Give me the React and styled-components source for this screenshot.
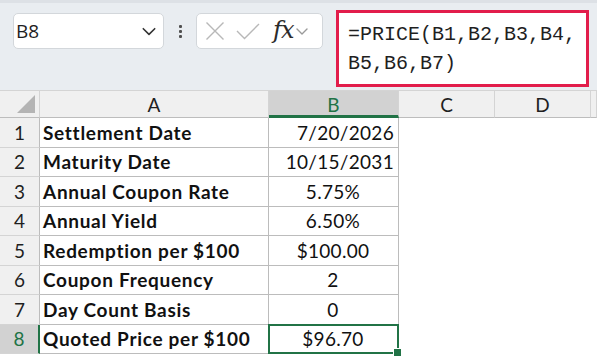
import React from "react";
import styled, { createGlobalStyle } from "styled-components";

const GlobalStyle = createGlobalStyle`
  html, body {
    margin: 0;
    padding: 0;
    background: #ffffff;
  }
  body {
    width: 597px;
    height: 360px;
    overflow: hidden;
    font-family: "Lato", "Liberation Sans", sans-serif;
  }
`;

const Page = styled.div`
  width: 597px;
  height: 360px;
  display: flex;
  flex-direction: column;
  overflow: hidden;
`;

const FormulaBar = styled.div`
  height: 90px;
  flex: none;
  display: flex;
  align-items: flex-start;
  background: #e9edf1;
  border-top: 3px solid #dde1e6;
  box-sizing: border-box;
  padding-left: 13px;
`;

const NameBox = styled.div`
  margin-top: 10px;
  width: 151px;
  height: 36px;
  box-sizing: border-box;
  background: #ffffff;
  border: 1px solid #d3d7db;
  border-radius: 5px;
  display: flex;
  align-items: center;
  justify-content: space-between;
  padding: 0 6px 0 2px;
  font-family: "Open Sans", "Liberation Sans", sans-serif;
  font-size: 19px;
  color: #1f1f1f;
`;

const Dots = styled.div`
  width: 32px;
  height: 36px;
  margin-top: 10px;
  display: flex;
  flex-direction: column;
  align-items: center;
  justify-content: center;
  gap: 2px;

  span {
    width: 3px;
    height: 3px;
    background: #505050;
    border-radius: 1px;
  }
`;

const FxGroup = styled.div`
  margin-top: 10px;
  width: 127px;
  height: 36px;
  box-sizing: border-box;
  background: #ffffff;
  border: 1px solid #d3d7db;
  border-radius: 5px;
  display: flex;
  align-items: center;
  padding-left: 8px;
  gap: 11px;
`;

const FxLabel = styled.span`
  font-family: "DejaVu Serif", "Liberation Serif", serif;
  font-style: italic;
  font-size: 24px;
  color: #2b2b2b;
  letter-spacing: -1px;
  margin-left: 2px;
  margin-right: -9px;
  margin-top: -3px;
`;

const FormulaInput = styled.div`
  margin-left: 13px;
  margin-top: 7px;
  width: 253px;
  height: 77px;
  box-sizing: border-box;
  border: 3px solid #e21d4b;
  background: #ffffff;
  padding: 7px 0 0 9px;
  font-family: "Liberation Mono", "DejaVu Sans Mono", monospace;
  font-size: 20px;
  line-height: 29px;
  color: #1f1f1f;
  white-space: pre;
`;

const Sheet = styled.div`
  display: grid;
  grid-template-columns: 40px 229px 130px 96px 96px 1fr;
  grid-template-rows: 27px repeat(8, 29.5px);
  border-top: 1px solid #d4d4d4;
  background: #ffffff;
`;

const Corner = styled.div`
  background: #f0f0f0;
  border-right: 1px solid #d4d4d4;
  border-bottom: 1px solid #bdbdbd;
  position: relative;

  &::after {
    content: "";
    position: absolute;
    right: 4px;
    bottom: 4px;
    width: 0;
    height: 0;
    border-left: 18px solid transparent;
    border-bottom: 18px solid #b4b4b4;
  }
`;

const ColHead = styled.div`
  background: ${(p) => (p.$active ? "#d2d2d2" : "#f0f0f0")};
  color: ${(p) => (p.$active ? "#217346" : "#1f1f1f")};
  border-right: 1px solid #d4d4d4;
  border-bottom: ${(p) => (p.$active ? "3px solid #217346" : "1px solid #bdbdbd")};
  box-sizing: border-box;
  display: flex;
  align-items: center;
  justify-content: center;
  font-size: 19px;
  padding-top: ${(p) => (p.$active ? "2px" : "0")};
`;

const RowHead = styled.div`
  background: ${(p) => (p.$active ? "#d2d2d2" : "#f0f0f0")};
  color: ${(p) => (p.$active ? "#217346" : "#1f1f1f")};
  border-right: ${(p) => (p.$active ? "2px solid #217346" : "1px solid #bdbdbd")};
  border-bottom: 1px solid #d4d4d4;
  box-sizing: border-box;
  display: flex;
  align-items: center;
  justify-content: center;
  font-size: 19px;
`;

const Cell = styled.div`
  border-right: 1px solid #bcbcbc;
  border-bottom: 1px solid #bcbcbc;
  box-sizing: border-box;
  display: flex;
  align-items: center;
  justify-content: ${(p) => (p.$align === "right" ? "flex-end" : p.$align === "center" ? "center" : "flex-start")};
  padding: 0 4px 0 3px;
  font-size: 19px;
  font-weight: ${(p) => (p.$bold ? 700 : 400)};
  letter-spacing: ${(p) => (p.$bold ? "0.7px" : "0.3px")};
  color: #111111;
  white-space: nowrap;
  position: relative;
`;

const ActiveCell = styled(Cell)`
  border: 2px solid #217346;
  margin: -1px 0 0 -1px;

  &::after {
    content: "";
    position: absolute;
    right: -5px;
    bottom: -5px;
    width: 7px;
    height: 7px;
    background: #217346;
    border: 1px solid #ffffff;
  }
`;

const Blank = styled.div``;

const Chevron = ({ color = "#333", size = 14 }) => (
  <svg width={size} height={size} viewBox="0 0 14 14" fill="none">
    <path d="M2 5l5 5 5-5" stroke={color} strokeWidth="1.4" strokeLinecap="round" strokeLinejoin="round" />
  </svg>
);

const rows = [
  ["Settlement Date", "7/20/2026", "right"],
  ["Maturity Date", "10/15/2031", "right"],
  ["Annual Coupon Rate", "5.75%", "center"],
  ["Annual Yield", "6.50%", "center"],
  ["Redemption per $100", "$100.00", "center"],
  ["Coupon Frequency", "2", "center"],
  ["Day Count Basis", "0", "center"],
  ["Quoted Price per $100", "$96.70", "center"],
];

export default function App() {
  return (
    <Page>
      <GlobalStyle />
      <FormulaBar>
        <NameBox>
          <span>B8</span>
          <Chevron color="#333" size={16} />
        </NameBox>
        <Dots>
          <span />
          <span />
          <span />
        </Dots>
        <FxGroup>
          <svg width="20" height="20" viewBox="0 0 20 20" fill="none">
            <path d="M1.5 1.5l17 17M18.5 1.5l-17 17" stroke="#b8b8b8" strokeWidth="1.4" />
          </svg>
          <svg width="24" height="18" viewBox="0 0 24 18" fill="none">
            <path d="M1 9l7.5 7.5L23 2" stroke="#b8b8b8" strokeWidth="1.4" />
          </svg>
          <FxLabel>fx</FxLabel>
          <Chevron color="#9a9a9a" size={14} />
        </FxGroup>
        <FormulaInput>{"=PRICE(B1,B2,B3,B4,\nB5,B6,B7)"}</FormulaInput>
      </FormulaBar>
      <Sheet>
        <Corner />
        <ColHead>A</ColHead>
        <ColHead $active>B</ColHead>
        <ColHead>C</ColHead>
        <ColHead>D</ColHead>
        <ColHead />
        {rows.map(([label, value, align], i) => {
          const last = i === rows.length - 1;
          return (
            <React.Fragment key={label}>
              <RowHead $active={last}>{i + 1}</RowHead>
              <Cell $bold>{label}</Cell>
              {last ? (
                <ActiveCell $align={align}>{value}</ActiveCell>
              ) : (
                <Cell $align={align}>{value}</Cell>
              )}
              <Blank />
              <Blank />
              <Blank />
            </React.Fragment>
          );
        })}
      </Sheet>
    </Page>
  );
}
